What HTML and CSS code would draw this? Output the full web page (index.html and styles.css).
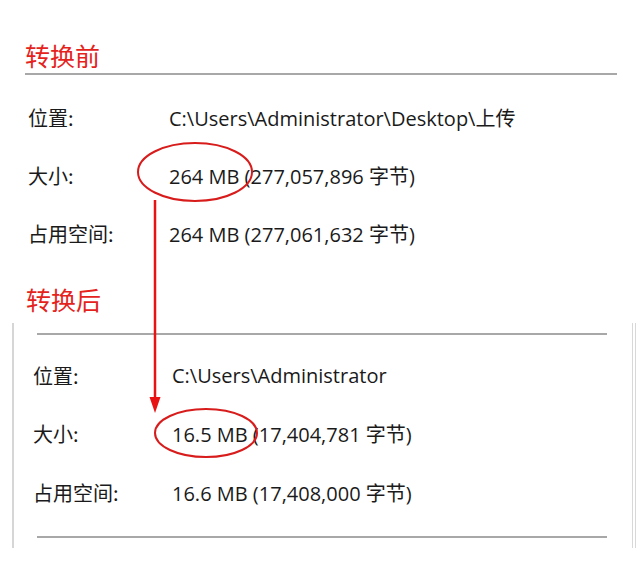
FILE: index.html
```html
<!DOCTYPE html>
<html lang="zh-CN">
<head>
<meta charset="utf-8">
<title>转换前后</title>
<link rel="stylesheet" href="styles.css">
</head>
<body>
<main class="page">
  <section class="before">
    <h2 class="title">转换前</h2>
    <div class="rule rule-top"></div>
    <div class="props">
      <div class="row"><span class="label">位置:</span><span class="value">C:\Users\Administrator\Desktop\上传</span></div>
      <div class="row"><span class="label">大小:</span><span class="value">264 MB (277,057,896 字节)</span></div>
      <div class="row"><span class="label">占用空间:</span><span class="value">264 MB (277,061,632 字节)</span></div>
    </div>
  </section>
  <section class="after">
    <h2 class="title title-after">转换后</h2>
    <div class="panel">
      <div class="rule rule-panel"></div>
      <div class="props props-after">
        <div class="row"><span class="label">位置:</span><span class="value">C:\Users\Administrator</span></div>
        <div class="row"><span class="label">大小:</span><span class="value">16.5 MB (17,404,781 字节)</span></div>
        <div class="row"><span class="label">占用空间:</span><span class="value">16.6 MB (17,408,000 字节)</span></div>
      </div>
      <div class="rule rule-panel rule-bottom"></div>
    </div>
  </section>
  <svg class="annot" width="640" height="588" viewBox="0 0 640 588" aria-hidden="true">
    <ellipse cx="195" cy="172" rx="57" ry="29" fill="none" stroke="#d81c1c" stroke-width="2"/>
    <ellipse cx="206" cy="433" rx="51" ry="24" fill="none" stroke="#d81c1c" stroke-width="2"/>
    <line x1="155" y1="200" x2="155" y2="402" stroke="#e81212" stroke-width="2.5"/>
    <polygon points="149.5,397 160.5,397 155,413" fill="#e81212"/>
  </svg>
</main>
</body>
</html>
```
FILE: styles.css
```css
html, body {
  margin: 0;
  padding: 0;
  background: #ffffff;
}
.page {
  position: relative;
  width: 640px;
  height: 588px;
  overflow: hidden;
  font-family: "Open Sans", "Noto Sans CJK SC", sans-serif;
  color: #1a1a1a;
}
.before {
  padding-top: 40px;
}
.title {
  margin: 0 0 0 25px;
  font-family: "Noto Sans CJK SC", sans-serif;
  font-weight: 400;
  font-size: 25px;
  line-height: 31px;
  height: 31px;
  color: #e5231d;
}
.rule {
  height: 2px;
  background: #a8a8a8;
}
.rule-top {
  margin: 2px 0 0 25px;
  width: 592px;
}
.props {
  display: flex;
  flex-direction: column;
  margin-top: 13px;
  padding-left: 28px;
}
.row {
  display: flex;
  align-items: center;
  height: 58px;
  font-size: 20px;
}
.label {
  width: 141px;
  flex: none;
  font-family: "Noto Sans CJK SC", sans-serif;
}
.value {
  white-space: nowrap;
}
.title-after {
  margin-top: 22px;
  margin-left: 26px;
}
.panel {
  margin: 8px 0 0 12px;
  width: 618px;
  border-left: 2px solid #d6d6d6;
  border-right: 4px double #d8d8d8;
  padding: 10px 0 10px;
}
.rule-panel {
  margin-left: 23px;
  width: 570px;
}
.props-after {
  margin-top: 11px;
  padding-left: 19px;
}
.props-after .row {
  height: 58.5px;
}
.props-after .label {
  width: 139px;
}
.rule-bottom {
  margin-top: 14px;
}
.annot {
  position: absolute;
  left: 0;
  top: 0;
  pointer-events: none;
}
```
